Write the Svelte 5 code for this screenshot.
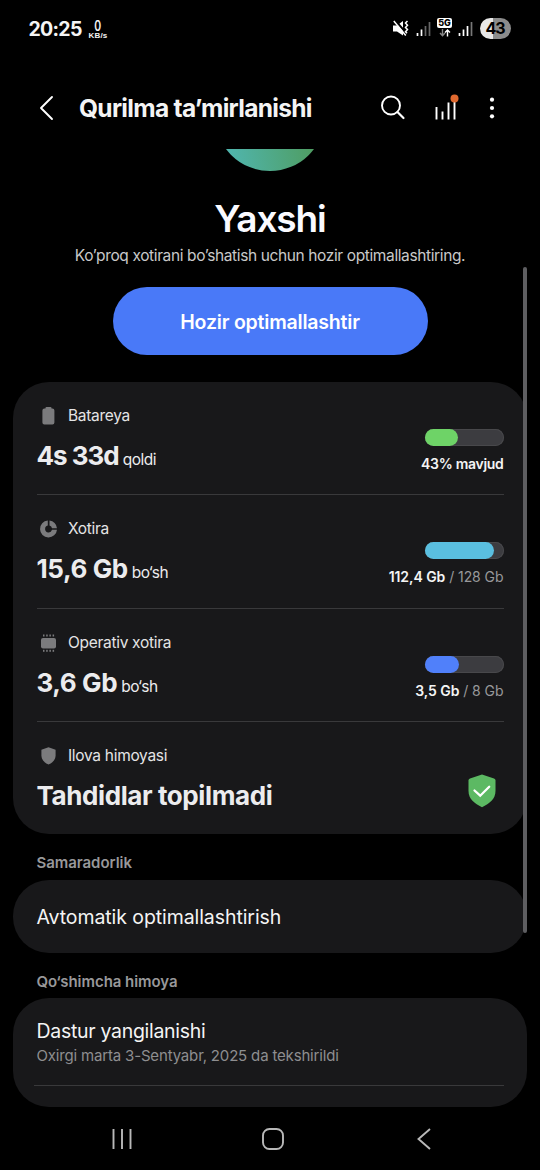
<script>
    const rows = [
        { icon: "battery", label: "Batareya", value: "4s 33d", unit: "qoldi", used: "43% mavjud", fill: 43, color: "#6ed367" },
        { icon: "storage", label: "Xotira", value: "15,6 Gb", unit: "bo‘sh", used: "112,4 Gb", total: "128 Gb", fill: 88, color: "#5abfe0" },
        { icon: "memory", label: "Operativ xotira", value: "3,6 Gb", unit: "bo‘sh", used: "3,5 Gb", total: "8 Gb", fill: 44, color: "#5080fa" },
        { icon: "shield", label: "Ilova himoyasi", value: "Tahdidlar topilmadi" },
    ];
    const pins = [4, 7.2, 10.4, 13.6];
</script>

<div class="screen">
    <div class="status">
        <span class="clock">20:25</span>
        <span class="speed"><b>0</b><small>KB/s</small></span>
        <div class="status-icons">
            <svg class="mute" width="16" height="17" viewBox="0 0 16 17">
                <path d="M0 5.500h4L10 1v14.500L4 11.500H0z" fill="#fff" />
                <path d="M2 .5l12.500 14" stroke="#000" stroke-width="2.400" />
                <path d="M.8 1l12 14.500" stroke="#fff" stroke-width="1.500" />
                <path d="M14.500 1l-2 2 2 2.200-2 2.200 2 2.200-2 2.200 1.500 1.500" stroke="#fff" stroke-width="1.500" fill="none" />
            </svg>
            <svg class="signal" width="15" height="16" viewBox="0 0 15 16">
                <path d="M1.500 12v3M5.500 8.500V15" stroke="#fff" stroke-width="1.700" />
                <path d="M9.500 5v10M13.500 1v14" stroke="#666" stroke-width="1.700" />
            </svg>
            <div class="network">
                <span>5G</span>
                <svg width="12" height="8" viewBox="0 0 12 8" fill="none" stroke-width="1.400">
                    <path d="M3.500 0v6.500M1 4l2.500 2.700L6 4" stroke="#888" />
                    <path d="M8.500 7.500V1M6 3.500L8.500 1 11 3.500" stroke="#fff" />
                </svg>
            </div>
            <svg class="signal second" width="15" height="16" viewBox="0 0 15 16">
                <path d="M1.500 12v3M5.500 8.500V15M9.500 5v10" stroke="#fff" stroke-width="1.700" />
                <path d="M13.500 1v14" stroke="#777" stroke-width="1.700" />
            </svg>
            <span class="charge">43</span>
        </div>
    </div>

    <header>
        <svg class="back" width="16" height="26" viewBox="0 0 16 26">
            <path d="M13 2L2 13l11 11" fill="none" stroke="#fff" stroke-width="1.900" stroke-linecap="round" stroke-linejoin="round" />
        </svg>
        <h1>Qurilma ta’mirlanishi</h1>
        <svg class="search" width="26" height="26" viewBox="0 0 26 26" fill="none" stroke="#fff" stroke-width="1.900">
            <circle cx="11" cy="10.500" r="9" />
            <path d="M17.500 17l6 6" stroke-width="2.200" stroke-linecap="round" />
        </svg>
        <svg class="chart" width="26" height="28" viewBox="0 0 26 28">
            <path d="M2.500 14v12.500M8.500 18.500v8M14.500 9.500v17M20.500 9v17.500" stroke="#fff" stroke-width="1.900" />
            <circle cx="20.500" cy="5.500" r="4" fill="#e0692f" />
        </svg>
        <svg class="more" width="6" height="24" viewBox="0 0 6 24" fill="#fff">
            <circle cx="3" cy="3.700" r="2.100" />
            <circle cx="3" cy="12" r="2.100" />
            <circle cx="3" cy="20.300" r="2.100" />
        </svg>
    </header>

    <main>
        <div class="orb"></div>
        <h2>Yaxshi</h2>
        <p class="hint">Ko’proq xotirani bo’shatish uchun hozir optimallashtiring.</p>
        <button>Hozir optimallashtir</button>

        <section class="card">
            {#each rows as row}
                <div class="row">
                    <div class="info">
                        <div class="label">
                            <svg class="icon" width="20" height="20" viewBox="0 0 20 20" fill="#7b7b7d">
                                {#if row.icon === "battery"}
                                    <path d="M7.500 1h4q1 0 1 1v.5h.9a2 2 0 0 1 2 2v12a2 2 0 0 1-2 2H5.400a2 2 0 0 1-2-2v-12a2 2 0 0 1 2-2h1.100V2q0-1 1-1z" />
                                {:else if row.icon === "storage"}
                                    <path d="M8.800 1.500A8.500 8.500 0 1 0 18 10.800h-5A3.500 3.500 0 1 1 8.800 6.500z" />
                                    <path d="M10.500 1.500A8.500 8.500 0 0 1 18 9.200h-5A3.500 3.500 0 0 0 10.500 6.500z" />
                                {:else if row.icon === "memory"}
                                    <rect x="2" y="5" width="15" height="10.500" rx="2" />
                                    {#each pins as x}
                                        <rect x={x} y="1.500" width="1.500" height="2" />
                                        <rect x={x} y="16.800" width="1.500" height="2" />
                                    {/each}
                                {:else}
                                    <path d="M9.500 1.200l7.100 2.600v6c0 4-3.100 6.900-7.100 8.800-4-1.900-7.100-4.800-7.100-8.800v-6z" />
                                {/if}
                            </svg>
                            {row.label}
                        </div>
                        <div class="value" class:tight={row.icon === "battery"}>{row.value}{#if row.unit}<small>{row.unit}</small>{/if}</div>
                    </div>
                    {#if row.fill}
                        <div class="usage">
                            <div class="bar"><div class="fill" style="width: {row.fill}%; background: {row.color}"></div></div>
                            <div class="amount" class:wide={row.total}><b>{row.used}</b>{#if row.total}<span>&nbsp;/ {row.total}</span>{/if}</div>
                        </div>
                    {:else}
                        <svg class="safe" width="28" height="34" viewBox="0 0 28 34">
                            <path d="M14 .5l12 4q1.500.5 1.500 2V17c0 8-6 12.500-13.500 16.300C6.500 29.500.5 25 .5 17V6.500q0-1.500 1.500-2z" fill="#5cb963" />
                            <path d="M6.500 16.500l5.700 5.200 9-9" fill="none" stroke="#fff" stroke-width="2.300" stroke-linecap="round" />
                        </svg>
                    {/if}
                </div>
            {/each}
        </section>

        <h3>Samaradorlik</h3>
        <section class="card single">Avtomatik optimallashtirish</section>

        <h3 class="extra">Qo‘shimcha himoya</h3>
        <section class="card update">
            <h4>Dastur yangilanishi</h4>
            <p>Oxirgi marta 3-Sentyabr, 2025 da tekshirildi</p>
        </section>
    </main>

    <nav>
        <svg width="20" height="22" viewBox="0 0 20 22"><path d="M1.500 1v20M10 1v20M18.500 1v20" stroke="#b8b8b8" stroke-width="1.900" /></svg>
        <svg class="home" width="22" height="22" viewBox="0 0 22 22"><rect x="1" y="1" width="20" height="20" rx="6.500" fill="none" stroke="#b8b8b8" stroke-width="1.900" /></svg>
        <svg width="14" height="22" viewBox="0 0 14 22"><path d="M13 1L1.500 11 13 21" fill="none" stroke="#b8b8b8" stroke-width="1.900" /></svg>
    </nav>
    <div class="scrollbar"></div>
</div>

<style>
    :global(body) {
        background: #000;
    }
    .screen {
        position: relative;
        display: flex;
        flex-direction: column;
        width: 540px;
        height: 1170px;
        overflow: hidden;
        background: #000;
        color: #f4f4f4;
        font-family: Inter, Roboto, sans-serif;
        white-space: nowrap;
    }
    h1, h2, h3, h4, p {
        margin: 0;
    }
    svg {
        display: block;
        flex: none;
    }

    .status {
        display: flex;
        flex: none;
        align-items: center;
        height: 58px;
        padding: 0 29px 1px 28.5px;
        box-sizing: border-box;
    }
    .clock {
        width: 59.5px;
        font-size: 19.5px;
        font-weight: 700;
        letter-spacing: -0.7px;
    }
    .speed {
        display: flex;
        flex-direction: column;
        align-items: center;
        width: 20px;
        padding-top: 1px;
    }
    .speed b {
        font-size: 14px;
        font-weight: 600;
        line-height: 13px;
        transform: scaleX(.75);
    }
    .speed small {
        font-family: "Liberation Sans", sans-serif;
        font-size: 8px;
        font-weight: 700;
        line-height: 8px;
        letter-spacing: 0.2px;
    }
    .status-icons {
        display: flex;
        align-items: center;
        margin-left: auto;
    }
    .signal {
        margin-left: 7px;
    }
    .second {
        margin-left: 6px;
    }
    .network {
        display: flex;
        flex-direction: column;
        align-items: center;
        gap: 1px;
        margin: -2px 0 0 6px;
    }
    .network span {
        width: 15px;
        background: #fff;
        border-radius: 2px;
        color: #000;
        font-size: 9px;
        font-weight: 800;
        line-height: 10px;
        text-align: center;
    }
    .charge {
        width: 31px;
        height: 21px;
        margin: 0 0 0 7px;
        border-radius: 11px;
        background: linear-gradient(90deg, #e8e8e8 43%, #8c8c8c 43%);
        color: #000;
        font-size: 16px;
        font-weight: 700;
        line-height: 21px;
        text-align: center;
        letter-spacing: -1px;
        text-indent: -1px;
    }

    header {
        display: flex;
        flex: none;
        align-items: center;
        height: 91px;
        padding: 8px 45px 0 39px;
        box-sizing: border-box;
    }
    h1 {
        margin-left: 24px;
        font-size: 24.5px;
        font-weight: 700;
        letter-spacing: -0.7px;
    }
    .search {
        margin-left: auto;
    }
    .chart {
        margin: -2px 0 0 28px;
    }
    .more {
        margin-left: 29px;
    }

    main {
        display: flex;
        flex: none;
        flex-direction: column;
        align-items: center;
        height: 958px;
        overflow: hidden;
    }
    .orb {
        flex: none;
        width: 110px;
        height: 110px;
        margin-top: -88px;
        border-radius: 50%;
        background: linear-gradient(80deg, #50b6b0 10%, #4f9b5c 85%);
    }
    h2 {
        margin-top: 26px;
        color: #fafaff;
        font-size: 37px;
        font-weight: 600;
        line-height: 44px;
        letter-spacing: -1.1px;
    }
    .hint {
        margin-top: 4px;
        color: #c9c9c9;
        font-size: 15.5px;
        line-height: 22px;
        letter-spacing: -0.38px;
    }
    button {
        flex: none;
        width: 315px;
        height: 68px;
        margin-top: 20px;
        padding: 1px 0 0;
        border: none;
        border-radius: 34px;
        background: #4979f8;
        color: #fff;
        font: 600 19.5px Inter, Roboto, sans-serif;
        letter-spacing: -0.2px;
    }
    .card {
        flex: none;
        width: 514px;
        padding: 0 23.5px;
        box-sizing: border-box;
        border-radius: 36px;
        background: #18181a;
    }
    button + .card {
        height: 452px;
        margin-top: 27px;
    }
    .row {
        display: flex;
        justify-content: space-between;
        height: 113.4px;
        padding-top: 24px;
        box-sizing: border-box;
        border-bottom: 1.5px solid #39393b;
    }
    .row:last-child {
        border: none;
    }
    .label {
        display: flex;
        align-items: center;
        gap: 9.5px;
        margin-left: 2px;
        font-size: 15.5px;
        line-height: 20px;
        letter-spacing: -0.3px;
        color: #e4e4e5;
    }
    .value {
        margin-top: 14px;
        color: #ececee;
        font-size: 26px;
        font-weight: 700;
        line-height: 32px;
        letter-spacing: -0.4px;
    }
    .value.tight {
        letter-spacing: -1px;
    }
    .value small {
        margin-left: 4px;
        font-size: 15.5px;
        font-weight: 400;
        letter-spacing: -0.5px;
    }
    .usage {
        display: flex;
        flex-direction: column;
        align-items: flex-end;
        padding-top: 23px;
    }
    .bar {
        width: 79px;
        height: 17px;
        border-radius: 9px;
        background: #3c3c40;
        box-shadow: inset 0 0 0 1px #48484b;
    }
    .fill {
        height: 100%;
        border-radius: 9px;
    }
    .amount {
        margin-top: 8px;
        font-size: 14px;
        line-height: 20px;
        letter-spacing: -0.3px;
    }
    .amount.wide {
        letter-spacing: -0.06px;
    }
    .amount b {
        font-weight: 600;
    }
    .amount span {
        color: #98989a;
    }
    .safe {
        margin: 28px 8px 0 0;
    }

    h3 {
        align-self: flex-start;
        margin: 18px 0 7px 36.5px;
        color: #98989a;
        font-size: 15px;
        font-weight: 600;
        line-height: 21px;
        letter-spacing: -0.05px;
    }
    .single {
        height: 73px;
        font-size: 19.5px;
        line-height: 74px;
        letter-spacing: -0.08px;
    }
    .extra {
        margin-bottom: 6px;
    }
    .update {
        height: 109px;
        padding-top: 21px;
    }
    h4 {
        font-size: 19.5px;
        font-weight: 400;
        line-height: 24px;
        letter-spacing: -0.3px;
    }
    .update p {
        margin-left: -3px;
        padding: 3px 0 18.5px 3px;
        border-bottom: 1.5px solid #39393b;
        color: #8e8e90;
        font-size: 15px;
        line-height: 20px;
        letter-spacing: -0.17px;
    }

    nav {
        display: flex;
        flex: none;
        align-items: center;
        justify-content: space-between;
        height: 63px;
        padding: 1px 109px 0 112px;
        box-sizing: border-box;
    }
    .home {
        margin-right: 4px;
    }
    .scrollbar {
        position: absolute;
        top: 267px;
        left: 523px;
        width: 4px;
        height: 666px;
        border-radius: 2px;
        background: #5e5e61;
    }
</style>
